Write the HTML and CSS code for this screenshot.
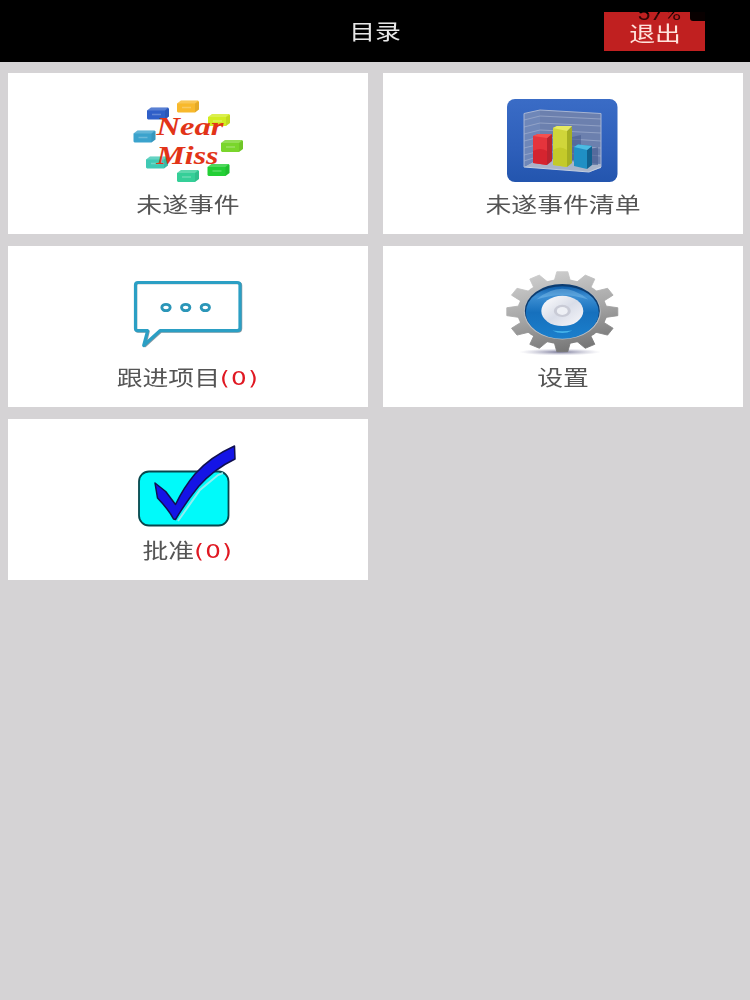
FILE: index.html
```html
<!DOCTYPE html>
<html lang="zh-CN">
<head>
    <meta charset="UTF-8">
    <meta name="viewport" content="width=device-width, initial-scale=1.0">
    <title>目录</title>
    <link rel="stylesheet" href="styles.css">
</head>
<body>

    <header class="header">
        <h1><span class="wide">目录</span></h1>
        <button class="logout"><span class="wide">退出</span></button>
        <div class="status">
            <span class="percent">57%</span>
            <span class="battery"></span>
        </div>
    </header>

    <main class="menu">
        <a class="card">
            <svg class="icon" viewBox="0 0 120 96">
                <defs>
                    <g id="brick">
                        <path d="M0 3 L4 0 H21 L22 1 V9 L18 12 H1 L0 11 Z"/>
                        <path d="M0 3 L4 0 H21 L18 3 Z" fill="#fff" opacity=".2"/>
                        <path d="M18 3 L22 1 V9 L18 12 Z" fill="#000" opacity=".08"/>
                        <path d="M5 7 H14" stroke="#fff" stroke-width="1.5" opacity=".25"/>
                    </g>
                </defs>
                <use href="#brick" x="19" y="14.5" fill="#2f5fc8"/>
                <use href="#brick" x="49" y="7.5" fill="#f8b92c"/>
                <use href="#brick" x="80" y="21" fill="#d2ec22"/>
                <use href="#brick" x="93" y="47" fill="#7ad62c"/>
                <use href="#brick" x="79.5" y="71" fill="#23cf35"/>
                <use href="#brick" x="49" y="77" fill="#35cf98"/>
                <use href="#brick" x="18" y="63.5" fill="#3fc9b4"/>
                <use href="#brick" x="5.5" y="37.5" fill="#3ba3cd"/>
                <text class="near" x="28.5" y="41.5" textLength="67" lengthAdjust="spacingAndGlyphs">Near</text>
                <text class="near" x="28.5" y="70.5" textLength="62" lengthAdjust="spacingAndGlyphs">Miss</text>
            </svg>
            <p><span class="wide">未遂事件</span></p>
        </a>

        <a class="card">
            <svg class="icon" viewBox="0 0 120 96">
                <defs>
                    <linearGradient id="tile" x1="0" y1="0" x2="0" y2="1">
                        <stop offset="0" stop-color="#3a6cc6"/>
                        <stop offset=".6" stop-color="#2e5fba"/>
                        <stop offset="1" stop-color="#2355ae"/>
                    </linearGradient>
                </defs>
                <rect x="4" y="6" width="110.5" height="83" rx="8" fill="url(#tile)"/>
                <path d="M21 20.5 L37 17 V65 L21 74 Z" fill="#6f87b8"/>
                <path d="M37 17 L98 20.5 V71 L37 65 Z" fill="#6c80ae"/>
                <path d="M21 74 L37 65 L98 71 V75 L86 79 Z" fill="#a9b4ca"/>
                <path d="M21 74 L86 79 L98 74" fill="none" stroke="#c5cfe0" stroke-width="1"/>
                <path d="M21 27 L37 23 L98 26 M21 34 L37 30 L98 33 M21 41 L37 37 L98 40 M21 48 L37 44 L98 48 M21 55 L37 51 L98 55 M21 62 L37 58 L98 63 M21 68 L37 63" fill="none" stroke="#a0afce" stroke-width=".7"/>
                <path d="M21 74 V20.5 L37 17 L98 20.5 V74" fill="none" stroke="#a7b5d3" stroke-width="1"/>
                <path d="M69 44 L78 42 V67 H69 Z M89 56 L95 54 V72 H89 Z" fill="#465c8f" opacity=".6"/>
                <path d="M30 43 L35 41 H49 L44 45 V72 L30 70 Z" fill="#e5343c"/>
                <path d="M44 45 L49 41 V68 L44 72 Z" fill="#b9232f"/>
                <path d="M30 43 L35 41 H49 L44 45 Z" fill="#f4504f"/>
                <path d="M30 58 Q37 54 44 58 V72 L30 70 Z" fill="#d5242f"/>
                <path d="M50 35 L54 33 H69 L64 38 V74 L50 72 Z" fill="#d0d63a"/>
                <path d="M64 38 L69 34 V70 L64 74 Z" fill="#a5af22"/>
                <path d="M50 35 L54 33 H69 L64 38 Z" fill="#e6ea63"/>
                <path d="M50 57 Q57 52 64 57 V74 L50 72 Z" fill="#c4ca2a"/>
                <path d="M71 54 L75 51.5 L89 53 L84 57 V76 L71 73 Z" fill="#1f8fc4"/>
                <path d="M84 57 L89 53 V72 L84 76 Z" fill="#11618f"/>
                <path d="M71 54 L75 51.5 L89 53 L84 57 Z" fill="#4cbbe3"/>
            </svg>
            <p><span class="wide">未遂事件清单</span></p>
        </a>

        <a class="card">
            <svg class="icon" viewBox="0 0 120 96">
                <g fill="none" stroke-linejoin="round">
                    <path d="M10 17 H110 Q113 17 113 19.5 V62.5 Q113 65.5 110 65.5 H33 L17 80 L20.5 65.5 H10 Q8 65.5 8 63 V19.5 Q8 17 10 17 Z" stroke="#8b9aa2" stroke-width="2.5"/>
                    <path d="M10 16.5 H109 Q112 16.5 112 19 V62 Q112 64.7 109 64.7 H32 L15.7 79.5 L19.7 64.7 H10 Q7.5 64.7 7.5 62.5 V19 Q7.5 16.5 10 16.5 Z" stroke="#2b9fc4" stroke-width="3.2"/>
                    <g stroke="#2b96b8" stroke-width="2.8">
                        <ellipse cx="38" cy="41.5" rx="4.2" ry="3.2"/>
                        <ellipse cx="57.7" cy="41.5" rx="4.2" ry="3.2"/>
                        <ellipse cx="77.3" cy="41.5" rx="4.2" ry="3.2"/>
                    </g>
                </g>
            </svg>
            <p><span class="wide">跟进项目<b>(0)</b></span></p>
        </a>

        <a class="card">
            <svg class="icon" viewBox="0 0 120 96">
                <defs>
                    <linearGradient id="metal" gradientUnits="userSpaceOnUse" x1="-15" y1="-55" x2="15" y2="55">
                        <stop offset="0" stop-color="#cdcdcd"/>
                        <stop offset=".5" stop-color="#a6a6a6"/>
                        <stop offset="1" stop-color="#737373"/>
                    </linearGradient>
                    <linearGradient id="blue" x1="0" y1="0" x2="0" y2="1">
                        <stop offset="0" stop-color="#0d5ca9"/>
                        <stop offset=".2" stop-color="#3d8fd3"/>
                        <stop offset=".5" stop-color="#1670bd"/>
                        <stop offset="1" stop-color="#1b7fcc"/>
                    </linearGradient>
                    <linearGradient id="disc" x1="0" y1="0" x2="1" y2="1">
                        <stop offset="0" stop-color="#fff"/>
                        <stop offset=".5" stop-color="#d9dde8"/>
                        <stop offset="1" stop-color="#f7f7fb"/>
                    </linearGradient>
                    <radialGradient id="shadow">
                        <stop offset="0" stop-color="#55557c" stop-opacity=".8"/>
                        <stop offset="1" stop-color="#9d9dbb" stop-opacity="0"/>
                    </radialGradient>
                </defs>
                <ellipse cx="57" cy="86" rx="41" ry="3.5" fill="url(#shadow)"/>
                <g transform="translate(59.3 45.7) scale(1 .72)">
                    <g fill="url(#metal)">
                        <circle r="45"/>
                        <path d="M-8 -43 L-5.5 -55.5 H5.5 L8 -43 Z M-8 43 L-5.5 55.5 H5.5 L8 43 Z M-43 -8 L-55.5 -5.5 V5.5 L-43 8 Z M43 -8 L55.5 -5.5 V5.5 L43 8 Z
                            M41.2 14.6 L50.8 23 L45.3 32.5 L33.2 28.4 Z M14.6 41.2 L23 50.8 L32.5 45.3 L28.4 33.2 Z
                            M-41.2 14.6 L-50.8 23 L-45.3 32.5 L-33.2 28.4 Z M-14.6 41.2 L-23 50.8 L-32.5 45.3 L-28.4 33.2 Z
                            M41.2 -14.6 L50.8 -23 L45.3 -32.5 L33.2 -28.4 Z M14.6 -41.2 L23 -50.8 L32.5 -45.3 L28.4 -33.2 Z
                            M-41.2 -14.6 L-50.8 -23 L-45.3 -32.5 L-33.2 -28.4 Z M-14.6 -41.2 L-23 -50.8 L-32.5 -45.3 L-28.4 -33.2 Z"
                            fill-rule="nonzero" stroke="url(#metal)" stroke-width="1" stroke-linejoin="round"/>
                    </g>
                    <circle r="38.5" fill="#b9bdc2"/>
                    <circle r="37.5" cy="-1" fill="#0c3c70"/>
                    <circle r="36.5" cy="1" fill="url(#blue)"/>
                    <path d="M-26 -17 Q0 -47 26 -17 Q0 -29 -26 -17 Z" fill="#8cc7f0" opacity=".4"/>
                    <path d="M-10 26 Q0 28 10 26 Q0 33 -10 26 Z" fill="#46b4ea"/>
                    <circle r="21" cy="-1" fill="url(#disc)"/>
                    <circle r="8.5" cy="-1" fill="#c9cbd6"/>
                    <circle r="5.5" cy="-1" fill="#eef0f5"/>
                </g>
            </svg>
            <p><span class="wide">设置</span></p>
        </a>

        <a class="card">
            <svg class="icon" viewBox="0 0 120 96">
                <rect x="11" y="32.5" width="89.5" height="54" rx="10" fill="#00fafa" stroke="#07474d" stroke-width="1.8"/>
                <path d="M50 82 L72 51 L90 36 L95 34" fill="none" stroke="#8eeef0" stroke-width="2"/>
                <path d="M27 44 L37.7 52.5 L47.5 65.5 Q56 48 67 35 Q82 18 106.5 7 L107 20 Q86 30 70.5 47.5 Q58 63 47.5 80.5 L45.5 80 Q41 71 29.5 59 Z" fill="#1414e6" stroke="#10104f" stroke-width="1.5" stroke-linejoin="round"/>
            </svg>
            <p><span class="wide">批准<b>(0)</b></span></p>
        </a>
    </main>

</body>
</html>
```

FILE: styles.css
```css
* {
    margin: 0; padding: 0;
    box-sizing: border-box;
}
body {
    background: #d5d3d5;
    font-family: Roboto, "Noto Sans CJK SC", sans-serif;
    min-height: 100vh;
}
.header {
    position: relative;
    display: flex;
    align-items: center;
    justify-content: center;
    height: 62px;
    background: #000;
    color: #e8e8e8;
}
h1 {
    font-size: 21px;
    font-weight: 400;
    line-height: 30px;
    padding-top: 2px;
}
/* labels are drawn wider than they are tall */
.wide {
    display: inline-block;
    transform: scaleX(1.23);
    white-space: nowrap;
}
.logout {
    position: absolute;
    top: 12px;
    right: 45px;
    width: 101px;
    height: 39px;
    border: none;
    background: #c02020;
    color: #ffe3dc;
    font: inherit;
    font-size: 21px;
    line-height: 30px;
    padding-top: 4px;
}
.status {
    position: absolute;
    top: 0;
    right: 45px;
    width: 68px;
    height: 21px;
    color: #350505;
}
/* black on the black bar, so only the part over the button shows */
.percent {
    position: absolute;
    left: 0;
    bottom: -1px;
    font-size: 18px;
    line-height: 16px;
    background: linear-gradient(#000 50%, #350505 50%);
    -webkit-background-clip: text;
    background-clip: text;
    color: transparent;
    transform: scaleX(1.32);
    transform-origin: left;
}
.battery {
    position: absolute;
    right: 0;
    bottom: 0;
    width: 15px;
    height: 9px;
    background: #080000;
    border-bottom-left-radius: 3px;
}
.menu {
    display: grid;
    grid-template-columns: 360px 360px;
    grid-auto-rows: 161px;
    gap: 12px 15px;
    padding: 11px 8px;
}
.card {
    display: flex;
    flex-direction: column;
    align-items: center;
    padding-top: 20px;
    background: #fff;
    color: #555;
}
.icon {
    width: 120px;
    height: 96px;
}
.card p {
    font-size: 21px;
    line-height: 30px;
    padding-top: 1px;
}
.card b {
    color: #e01822;
    font-family: "DejaVu Sans", sans-serif;
    font-size: 20px;
    font-weight: 400;
    line-height: 1;
    letter-spacing: 1.2px;
}
.near {
    font-family: "Liberation Serif", serif;
    font-size: 25px;
    font-weight: bold;
    font-style: italic;
    fill: #e23418;
}
```
